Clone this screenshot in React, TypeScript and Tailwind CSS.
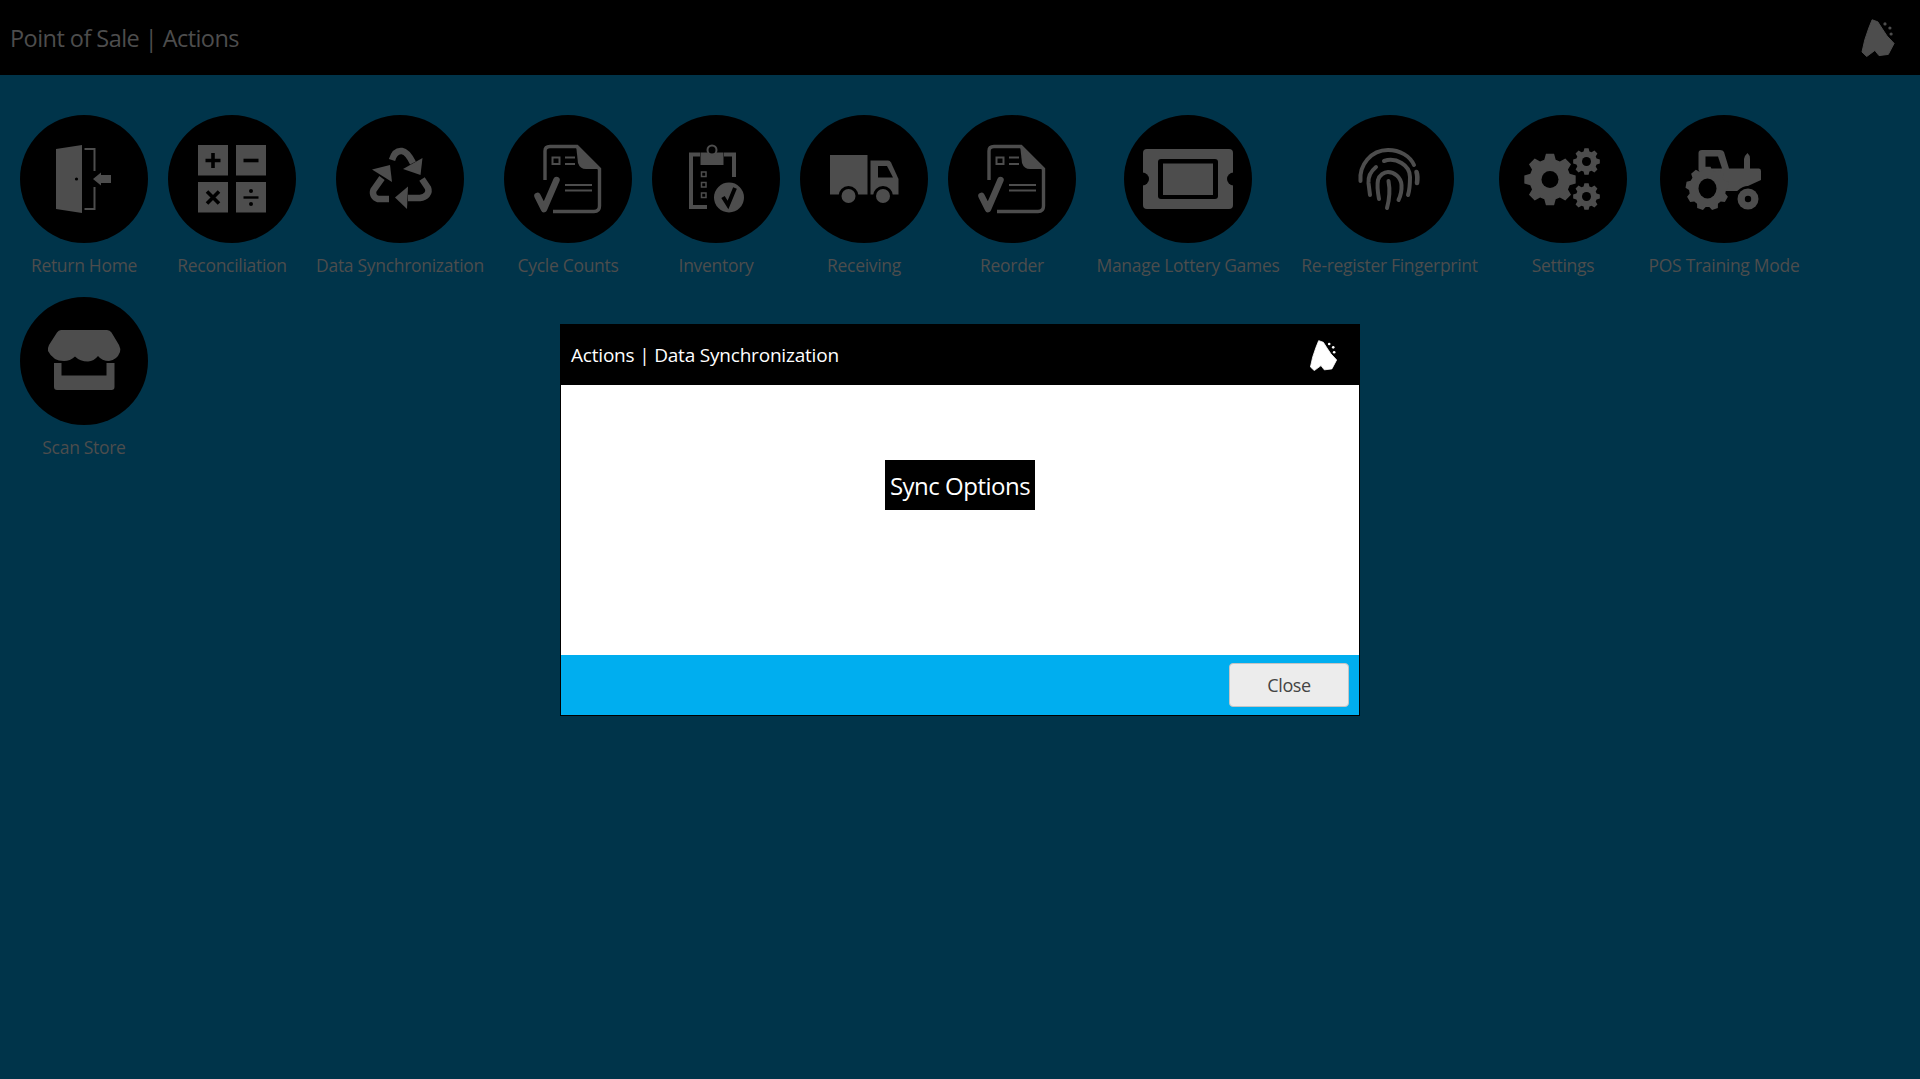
import React from 'react';

const G = '#4d4d4d';

// teeth outline for the gears and the tractor wheel
const gearPath = (cx: number, cy: number, outer: number, inner: number, teeth: number): string => {
  const pts: string[] = [];
  const step = (Math.PI * 2) / teeth;
  for (let i = 0; i < teeth; i++) {
    const a = i * step - Math.PI / 2;
    const p = (r: number, t: number) =>
      `${(cx + r * Math.cos(a + t * step)).toFixed(2)} ${(cy + r * Math.sin(a + t * step)).toFixed(2)}`;
    pts.push(p(inner, -0.36), p(outer, -0.2), p(outer, 0.2), p(inner, 0.36));
  }
  return `M${pts.join(' L')} Z`;
};

const Svg: React.FC<{ children: React.ReactNode }> = ({ children }) => (
  <svg viewBox="0 0 128 128" className="w-32 h-32 block">
    {children}
  </svg>
);

const DoorIcon = () => (
  <Svg>
    <path d="M36 34 L62 30 V98 L36 94 Z" fill={G} />
    <circle cx="56.5" cy="64" r="1.6" fill="#000" />
    <path d="M64.5 34 H74.5 V56 M74.5 72 V94 H64.5" fill="none" stroke={G} strokeWidth="2" />
    <path d="M73 64 L81 57.5 V60 H91 V68 H81 V70.5 Z" fill={G} />
  </Svg>
);

const CalcIcon = () => (
  <Svg>
    <rect x="30" y="30" width="30" height="30.5" fill={G} />
    <rect x="68" y="30" width="30" height="30.5" fill={G} />
    <rect x="30" y="67" width="30" height="30.5" fill={G} />
    <rect x="68" y="67" width="30" height="30.5" fill={G} />
    <path d="M45 38 V53 M37.5 45.5 H52.5" stroke="#000" strokeWidth="3.6" />
    <path d="M75.5 45.5 H90.5" stroke="#000" strokeWidth="3.6" />
    <path d="M39 76.5 L51 88.5 M51 76.5 L39 88.5" stroke="#000" strokeWidth="3.6" />
    <path d="M75.5 82.5 H90.5" stroke="#000" strokeWidth="2.4" />
    <circle cx="83" cy="76" r="2" fill="#000" />
    <circle cx="83" cy="89" r="2" fill="#000" />
  </Svg>
);

const RecycleIcon = () => (
  <Svg>
    <g fill="none" stroke={G} strokeWidth="6.5">
      <path d="M56 45 C58 38 62 35.5 66 36 C70 36.5 73 40 77 48" />
      <path d="M46 63 L37.5 75 C36 79 38 83 42 84 H53" />
      <path d="M72 83 H84 C90 82.5 94 78 92 73 L86 64" />
    </g>
    <path d="M86.5 43 L84.5 60 L67 54 Z" fill={G} />
    <path d="M54 50 L36 54.5 L56 67 Z" fill={G} />
    <path d="M59 82.5 L72 71.5 L71 94 Z" fill={G} />
  </Svg>
);

const DocCheckIcon = () => (
  <Svg>
    <path
      d="M41 65 V36 Q41 31.5 46 31.5 H73 L95.5 54 V91 Q95.5 96.5 90 96.5 H49"
      fill="none"
      stroke={G}
      strokeWidth="3.4"
    />
    <path d="M72 30 L97 54 H82 Q76 54 74 48 Z" fill={G} />
    <path d="M48.5 42.5 H55.5 V49 H48.5 Z" fill="none" stroke={G} strokeWidth="2" />
    <path d="M61 42.5 H71 M61 49 H71 M61 70 H88 M61 75.5 H88" stroke={G} strokeWidth="2" />
    <path d="M33.5 81 L40 94 L52.5 65" fill="none" stroke={G} strokeWidth="6.5" strokeLinecap="round" strokeLinejoin="round" />
  </Svg>
);

const ClipboardIcon = () => (
  <Svg>
    <path d="M48 39.5 H39 V92 H55 M72 39.5 H82 V62" fill="none" stroke={G} strokeWidth="4" />
    <path d="M48.5 37.5 H71.5 V50 H48.5 Z" fill={G} />
    <circle cx="60" cy="35" r="4.5" fill="#000" stroke={G} strokeWidth="2" />
    <g fill="none" stroke={G} strokeWidth="1.5">
      <rect x="49.5" y="57" width="4.5" height="4.5" />
      <rect x="49.5" y="67.5" width="4.5" height="4.5" />
      <rect x="49.5" y="78" width="4.5" height="4.5" />
    </g>
    <circle cx="77" cy="82.5" r="15" fill={G} />
    <path d="M71 82 L76 90 L83 73" fill="none" stroke="#000" strokeWidth="4" />
  </Svg>
);

const TruckIcon = () => (
  <Svg>
    <rect x="30" y="40" width="37.5" height="39.5" fill={G} />
    <path d="M70.5 45.5 H88 Q90 45.5 91 47.5 L98.5 64 V79.5 H70.5 Z" fill={G} />
    <path d="M78 51 H87 L93 62.5 H78 Z" fill="#000" />
    <circle cx="48.5" cy="81" r="10" fill="#000" />
    <circle cx="48.5" cy="81" r="7" fill={G} />
    <circle cx="83" cy="81" r="10" fill="#000" />
    <circle cx="83" cy="81" r="7" fill={G} />
  </Svg>
);

const TicketIcon = () => (
  <Svg>
    <rect x="19" y="34" width="90" height="60" rx="4" fill={G} />
    <circle cx="18.5" cy="64" r="6.5" fill="#000" />
    <circle cx="109.5" cy="64" r="6.5" fill="#000" />
    <rect x="34" y="44" width="60" height="40" rx="3" fill="#000" />
    <rect x="39" y="48.5" width="50" height="31.5" fill={G} />
  </Svg>
);

const FingerprintIcon = () => (
  <Svg>
    <g fill="none" stroke={G} strokeWidth="4" strokeLinecap="round">
      <path d="M34.5 66 C33 50 45 35 62 35 C74 35 84 41 88 50" />
      <path d="M90.5 57 C91.5 60 91.5 64 91 68" strokeWidth="4.6" />
      <path d="M58 46 C70 42 84 50 84 62 C84 68 84 74 82 80" />
      <path d="M50 52 C44 57 42 62 42.5 68 L44 80" />
      <path d="M53 84 C51.5 76 51 70 52 65 C53.5 60 58 57 62 57 C68 57 75 62 75.5 70 C75.8 75 75 80 72.5 85" />
      <path d="M62.5 66 C64 74 63.5 84 61 93" />
    </g>
  </Svg>
);

const GearsIcon = () => (
  <Svg>
    <path d={gearPath(51, 64.5, 26, 20.5, 8)} fill={G} />
    <circle cx="51" cy="64.5" r="8.5" fill="#000" />
    <path d={gearPath(87.5, 46.5, 13.5, 10.5, 8)} fill={G} />
    <circle cx="87.5" cy="46.5" r="4.5" fill="#000" />
    <path d={gearPath(87.5, 81.5, 13.5, 10.5, 8)} fill={G} />
    <circle cx="87.5" cy="81.5" r="4.5" fill="#000" />
  </Svg>
);

const TractorIcon = () => (
  <Svg>
    <path
      d="M38.5 55 V38 Q38.5 35 42 35 H60 Q63 35 64 37 L69 53.5 H84 V44 Q85 40 87.5 38 Q90 40 90 44 V53.5 H99 Q101 53.5 101 56 V65 L77 76 H50 Z"
      fill={G}
    />
    <path d="M45.5 41.5 H58 L62 53.5 H45.5 Z" fill="#000" />
    <path d={gearPath(47.5, 73.5, 22, 18.5, 9)} fill={G} />
    <ellipse cx="47.5" cy="73.5" rx="9" ry="10" fill="#000" />
    <circle cx="88" cy="84" r="13" fill="#000" />
    <circle cx="88" cy="84" r="10.5" fill={G} />
    <circle cx="88" cy="84" r="3.2" fill="#000" />
  </Svg>
);

const StoreIcon = () => (
  <Svg>
    <path d="M34 66 H41.5 V78.5 H86.5 V66 H94.5 V90 Q94.5 93 91.5 93 H37 Q34 93 34 90 Z" fill={G} />
    <path
      d="M41 33 H87 Q90 33 91.5 35.5 L99 48 Q101 52 100 55 Q97 63 89 64 Q82 64 78 59 Q74 64 68 64.5 Q60 64.5 55 59.5 Q50 64 44 64 Q33 64 28 54 Q27.5 51 29 48 L37 35.5 Q38.5 33 41 33 Z"
      fill={G}
    />
  </Svg>
);

const Logo: React.FC<{ color: string; className: string }> = ({ color, className }) => (
  <svg viewBox="0 0 33 38" className={className}>
    <path
      d="M10.6 0.8 L16.3 2.8 L21.6 11 L25.6 17 L32.6 24.4 L26.8 35.4 L17.5 36.6 L13.4 31.4 L5.2 37.5 L0.5 33 L3.3 20.7 L7.3 9 Z"
      fill={color}
      stroke={color}
      strokeWidth="1"
      strokeLinejoin="round"
    />
    <circle cx="23.5" cy="4.9" r="1.6" fill={color} />
    <circle cx="28.4" cy="9" r="1.6" fill={color} />
    <circle cx="29.6" cy="15" r="1.6" fill={color} />
  </svg>
);

const actions: { label: string; width: string; icon: React.ReactNode }[] = [
  { label: 'Return Home', width: 'w-[128px]', icon: <DoorIcon /> },
  { label: 'Reconciliation', width: 'w-[128px]', icon: <CalcIcon /> },
  { label: 'Data Synchronization', width: 'w-[168px]', icon: <RecycleIcon /> },
  { label: 'Cycle Counts', width: 'w-[128px]', icon: <DocCheckIcon /> },
  { label: 'Inventory', width: 'w-[128px]', icon: <ClipboardIcon /> },
  { label: 'Receiving', width: 'w-[128px]', icon: <TruckIcon /> },
  { label: 'Reorder', width: 'w-[128px]', icon: <DocCheckIcon /> },
  { label: 'Manage Lottery Games', width: 'w-[184px]', icon: <TicketIcon /> },
  { label: 'Re-register Fingerprint', width: 'w-[179px]', icon: <FingerprintIcon /> },
  { label: 'Settings', width: 'w-[128px]', icon: <GearsIcon /> },
  { label: 'POS Training Mode', width: 'w-[154px]', icon: <TractorIcon /> },
  { label: 'Scan Store', width: 'w-[128px]', icon: <StoreIcon /> },
];

export default function App() {
  return (
    <div className="relative min-h-[1079px] bg-[#00344a] font-['Open_Sans',sans-serif]">
      <header className="flex h-[75px] items-center justify-between bg-black pl-2.5 pr-[25px]">
        <h1 className="pt-[2px] text-[23.5px] tracking-[-0.55px] text-[#4d4d4d]">Point of Sale | Actions</h1>
        <Logo color={G} className="h-[38px] w-[34px]" />
      </header>

      <main className="flex flex-wrap gap-x-5 gap-y-[18px] px-5 pt-10">
        {actions.map(({ label, width, icon }) => (
          <div key={label} className={`flex flex-col items-center ${width}`}>
            <div className="h-32 w-32 rounded-full bg-black">{icon}</div>
            <span className="mt-2 whitespace-nowrap text-[17.5px] leading-7 tracking-[-0.3px] text-[#4d4d4d]">
              {label}
            </span>
          </div>
        ))}
      </main>

      <div className="absolute inset-x-0 top-[324px] flex justify-center">
        <div className="flex h-[392px] w-[800px] flex-col border border-black">
          <div className="flex h-[60px] items-center justify-between bg-black pl-[10px] pr-[22px]">
            <span className="pt-px text-[19px] tracking-[-0.2px] text-white">Actions | Data Synchronization</span>
            <Logo color="#ffffff" className="h-[31px] w-[27px]" />
          </div>
          <div className="flex h-[270px] justify-center bg-white pt-[75px]">
            <button className="h-[50px] w-[150px] bg-black pt-px text-[24px] tracking-[-0.5px] text-white">
              Sync Options
            </button>
          </div>
          <div className="flex flex-1 items-center justify-end bg-[#00aeef] pr-[10px]">
            <button className="h-[44px] w-[120px] rounded-[4px] border border-[#c4c4c4] bg-[#ececec] text-[18px] tracking-[-0.4px] text-[#444444]">
              Close
            </button>
          </div>
        </div>
      </div>
    </div>
  );
}
